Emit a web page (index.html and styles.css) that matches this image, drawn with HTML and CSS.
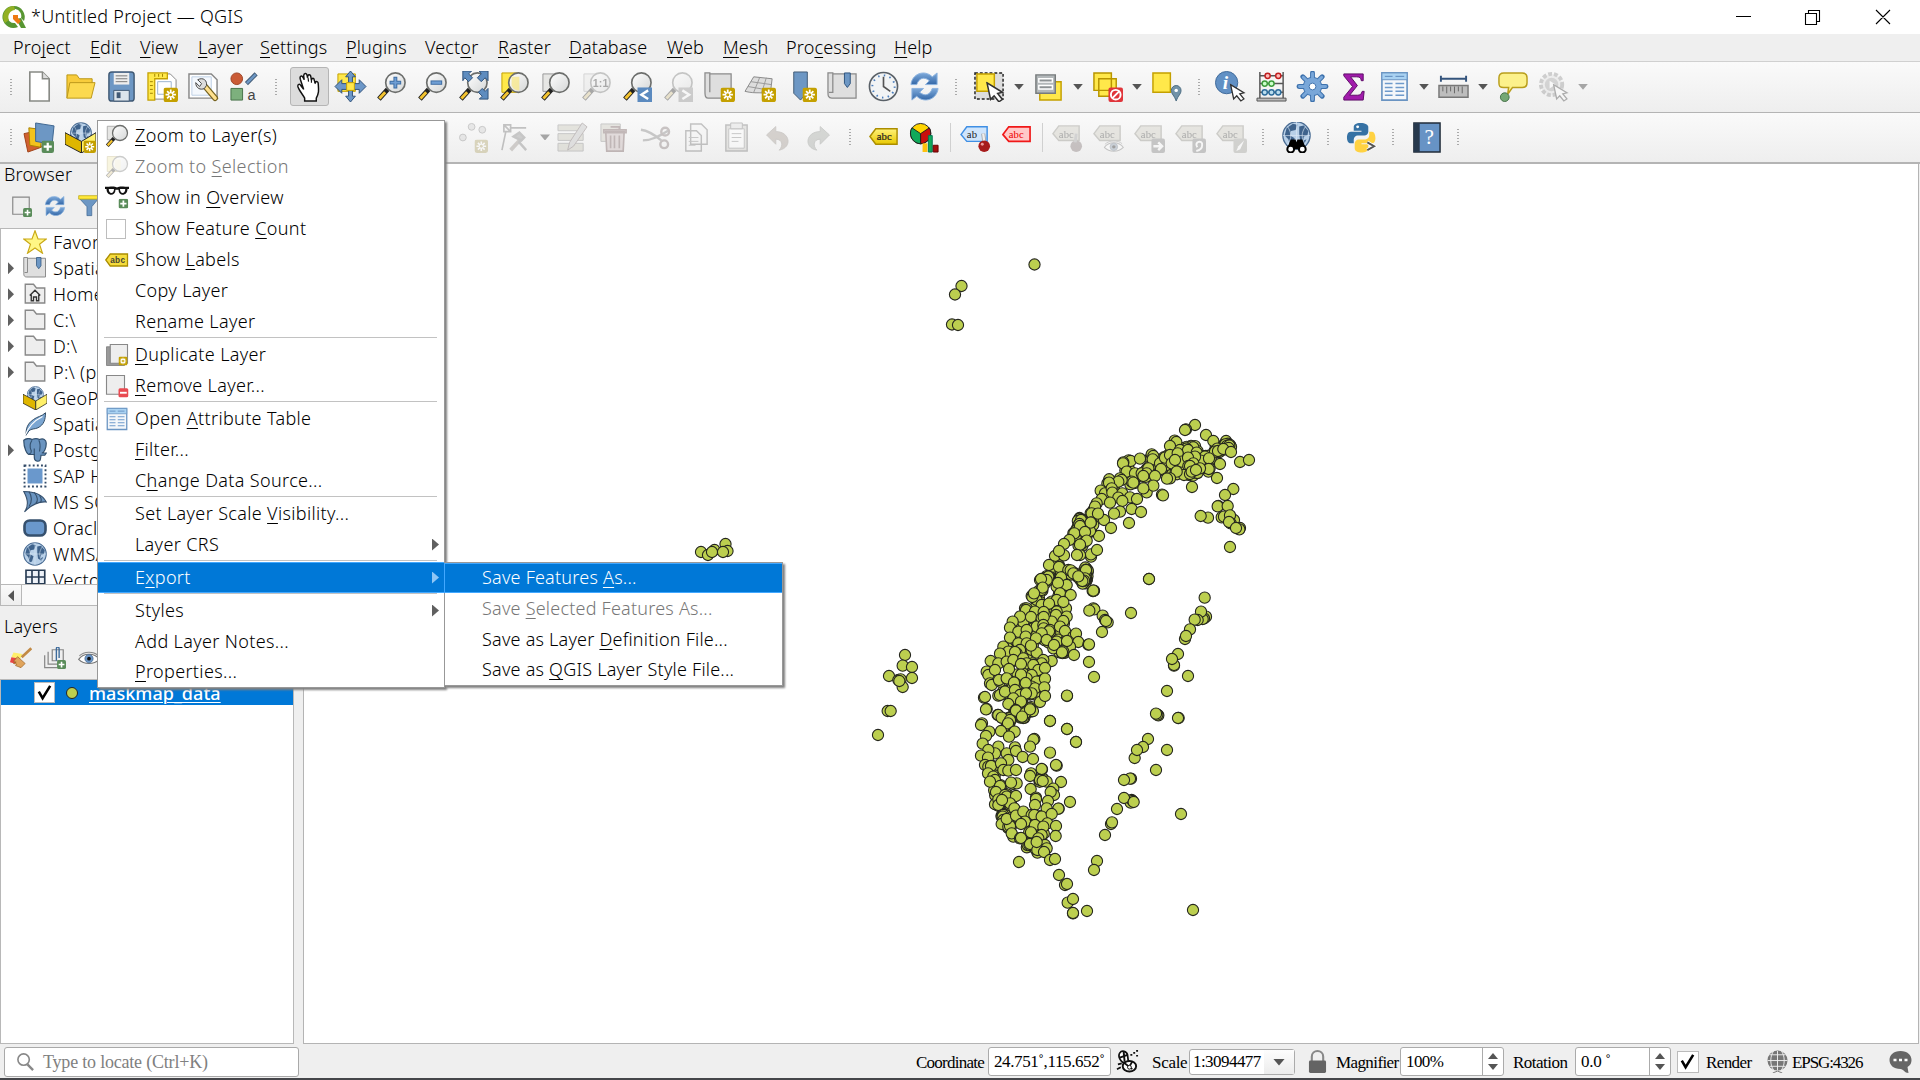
FILE: index.html
```html
<!DOCTYPE html>
<html lang="en">
<head>
<meta charset="utf-8">
<title>*Untitled Project — QGIS</title>
<link rel="stylesheet" href="styles.css">
</head>
<body>
<svg class="sprite" aria-hidden="true">
<defs>
<linearGradient id="blu" x2="0" y2="1"><stop offset="0" stop-color="#7da9da"/><stop offset="1" stop-color="#3468a8"/></linearGradient>
<linearGradient id="lens" x2="1" y2="1"><stop offset="0" stop-color="#fff"/><stop offset="1" stop-color="#d4d6d6"/></linearGradient>
<linearGradient id="tag" x2="0" y2="1"><stop offset="0" stop-color="#fff27a"/><stop offset="1" stop-color="#e8c800"/></linearGradient>
</defs>
<symbol id="logo" viewBox="0 0 24 24"><path d="M12 1a11 11 0 1 0 4 21l-3-4a7 7 0 1 1 6-5l3 3A11 11 0 0 0 12 1z" fill="#589632"/><path d="M12 1a11 11 0 0 0-9 17l4-3A7 7 0 0 1 13 5z" fill="#93b023"/><path d="M14 14l5-1 5 10h-5z" fill="#589632"/><path d="M11 10l5 0 0 3 3 3-3 3-5-5z" fill="#ee7913"/></symbol>
<symbol id="star" viewBox="0 0 14 14"><rect width="14" height="14" rx="2.5" fill="#c4a000"/><path d="M7 2v10M2 7h10M3.5 3.5l7 7M10.500 3.500l-7 7" stroke="#fff" stroke-width="1.700"/><circle cx="7" cy="7" r="1.500" fill="#c4a000"/></symbol>
<symbol id="plus" viewBox="0 0 14 14"><rect width="14" height="14" rx="2.500" fill="#5a8c5a"/><path d="M7 2.500v9M2.500 7h9" stroke="#fff" stroke-width="2.500"/></symbol>
<symbol id="mag" viewBox="0 0 32 32"><path d="M3 29l9-10" stroke="#222" stroke-width="5"/><path d="M3.500 28.500l6-6.500" stroke="#f4c430" stroke-width="3"/><path d="M12 19l3-3" stroke="#222" stroke-width="2"/><circle cx="20" cy="12" r="10" fill="url(#lens)" stroke="#6c6e6c" stroke-width="1.700"/></symbol>
<symbol id="cursor" viewBox="0 0 16 18"><path d="M1 1l3 14 3-3 4 5 3-2-4-5 4-1z" fill="#fff" stroke="#333" stroke-width="1.300"/></symbol>
<symbol id="new" viewBox="0 0 32 32"><path d="M6 1h13l7 7v23H6z" fill="#fff" stroke="#888a85" stroke-width="1.700"/><path d="M19 1v7h7" fill="#ddd" stroke="#888a85" stroke-width="1.500"/></symbol>
<symbol id="open" viewBox="0 0 32 32"><path d="M2 28V4h10l3 4h13v5" fill="#f8cc3c" stroke="#b99512"/><path d="M2 28l3-16h26l-4 16z" fill="#fcd94f" stroke="#bc981b"/></symbol>
<symbol id="save" viewBox="0 0 32 32"><rect x="3" y="1" width="26" height="30" rx="3" fill="#6d97c4" stroke="#415a75" stroke-width="1.500"/><path d="M8 2h16v12H8z" fill="#eee"/><path d="M10 5h12M10 8h12M10 11h12" stroke="#777"/><path d="M8 20h16v11H8z" fill="#dce4eb" stroke="#415a75"/><path d="M11 22h4v6h-4z" fill="#415a75"/></symbol>
<symbol id="layout" viewBox="0 0 32 32"><path d="M4 3h20l6 6v20H4z" fill="#fff" stroke="#888"/><path d="M1 2h20v6H8v22H1z" fill="#ffe84a" stroke="#c4a000" stroke-width="1.300"/><path d="M8 3v3M12 3v3M16 3v3M3 11h3M3 15h3M3 19h3M3 23h3" stroke="#a08200"/><path d="M11 11h14v13H11z" fill="none" stroke="#9bb4d0"/><use href="#star" x="17" y="17" width="15" height="15"/></symbol>
<symbol id="manager" viewBox="0 0 32 32"><path d="M1 3h23l6 6v19H1z" fill="#fff" stroke="#888" stroke-width="1.500"/><path d="M4 6h20v19H4z" fill="#f4f8fd" stroke="#bed0e5"/><path d="M17 15l11 13" stroke="#75621f" stroke-width="6" stroke-linecap="round"/><path d="M17 15l11 13" stroke="#ffe08d" stroke-width="3.500" stroke-linecap="round"/><path d="M10 9l4 4-2 3-4-4c0 6 5 8 9 6l2-3c1-5-3-9-9-6z" fill="#ddd" stroke="#444"/></symbol>
<symbol id="style" viewBox="0 0 32 32"><circle cx="8" cy="8" r="6" fill="#ca5b36" stroke="#9d4123"/><path d="M18 13L28 3" stroke="#415a75" stroke-width="4.500"/><path d="M18.500 12.500l9-9" stroke="#6d97c4" stroke-width="2.500"/><path d="M2 18h12v12H2z" fill="#7db07d" stroke="#47734a"/><text x="19" y="30" font-family="Liberation Sans" font-size="15" fill="#444">a</text></symbol>
<symbol id="hand" viewBox="0 0 32 32"><path d="M11 31v-3C9 24 5 20 4 16c-.5-2.500 2-3 3-1l3 4L6.500 8.500c-1-3.500 2-4.500 3-1.500l1 2-.5-4c0-3 3-3.500 3.500-.5l.5 2.500c0-4 3-4 3.500-.5l.5 3c.5-3 3-2.500 3 .5l1 2c1-2 3-1 3 1 .5 7 1 9-2 15v3z" fill="#fff" stroke="#111" stroke-width="1.500"/><path d="M14.500 7l.5 4M18 9v3M21.500 11v2" stroke="#111" stroke-width="1.200" fill="none"/></symbol>
<symbol id="panto" viewBox="0 0 32 32"><path d="M3 3h18v18H3z" fill="#ffe84a" stroke="#c4a000"/><path d="M16 0l5 6h-3v7h7v-4l7 7-7 7v-4h-7v7h3l-5 6-5-6h3v-7H7v4l-7-7 7-7v4h7V6h-3z" fill="#6c97c8" stroke="#2f527a"/><path d="M12 12h8v8h-8z" fill="#ffe84a" stroke="#c4a000"/></symbol>
<symbol id="zin" viewBox="0 0 32 32"><use href="#mag"/><path d="M20 6v12M14 12h12" stroke="#3d6ca2" stroke-width="4"/><path d="M20 7v10M15 12h10" stroke="#6f9ed4" stroke-width="2"/></symbol>
<symbol id="zout" viewBox="0 0 32 32"><use href="#mag"/><path d="M14 12h12" stroke="#3d6ca2" stroke-width="4.500"/><path d="M15 12h10" stroke="#6f9ed4" stroke-width="2.500"/></symbol>
<symbol id="zfull" viewBox="0 0 32 32"><use href="#mag"/><path d="M5 0h9l-3 3 4 4-4 4-4-4-2 3zM22 0h9v10l-3-3-4 4-4-4 4-4zM31 29h-9l3-3-4-4 4-4 3 3 3-3z" fill="#5e8cbf" stroke="#2f527a"/></symbol>
<symbol id="zsel" viewBox="0 0 32 32"><path d="M3 2h18v20H3z" fill="#ffe84a" stroke="#c4a000"/><use href="#mag"/><path d="M13 6h8v14a8 8 0 0 1-8-5z" fill="#f7e98c" opacity=".8"/></symbol>
<symbol id="zlay" viewBox="0 0 32 32"><path d="M3 3h18v18H3z" fill="#e6e6e4" stroke="#999"/><use href="#mag"/></symbol>
<symbol id="znat" viewBox="0 0 32 32"><use href="#zlay"/><text x="12" y="16" font-family="Liberation Sans" font-weight="bold" font-size="11" fill="#222">1:1</text></symbol>
<symbol id="zlast" viewBox="0 0 32 32"><use href="#mag"/><path d="M16 17h15v15H16z" fill="#5b8abf"/><path d="M27 20l-7 4.500 7 4.500" fill="none" stroke="#fff" stroke-width="2.500"/></symbol>
<symbol id="znext" viewBox="0 0 32 32"><use href="#mag"/><path d="M16 17h15v15H16z" fill="#888"/><path d="M20 20l7 4.500-7 4.500" fill="none" stroke="#fff" stroke-width="2.500"/></symbol>
<symbol id="mapv" viewBox="0 0 32 32"><path d="M6 3h22v25H4c-3 0-3-4-3-6V2h5v20" fill="#dedede" stroke="#8a8a8a" stroke-width="1.300"/><use href="#star" x="17" y="17" width="15" height="15"/></symbol>
<symbol id="map3" viewBox="0 0 32 32"><path d="M9 6l19 2-2 16c-8-3-14 0-26-3z" fill="#ddd" stroke="#888"/><path d="M6 11l21 3M3 16l23 4M15 7L9 22M22 7l-5 16" stroke="#999" fill="none"/><use href="#star" x="17" y="17" width="15" height="15"/></symbol>
<symbol id="bmk" viewBox="0 0 32 32"><path d="M8 1h14v21l-7 8-7-7z" fill="#6d97c4" stroke="#415a75"/><use href="#star" x="17" y="17" width="15" height="15"/></symbol>
<symbol id="bmks" viewBox="0 0 32 32"><path d="M6 3h24v25H5c-4 0-4-3-4-6V2h5v20H2" fill="#dfdfdf" stroke="#8a8a8a" stroke-width="1.300"/><path d="M18 2h6v11l-3 4-3-4z" fill="#6d97c4" stroke="#2e547e"/></symbol>
<symbol id="clock" viewBox="0 0 32 32"><circle cx="16" cy="16" r="14.500" fill="#f2f4f5" stroke="#596067" stroke-width="1.700"/><circle cx="16" cy="16" r="11.500" fill="none" stroke="#4b7ebd" stroke-width="2" stroke-dasharray="1.500 4.520"/><path d="M16 6v10l7 5" fill="none" stroke="#555" stroke-width="1.700"/></symbol>
<symbol id="refresh" viewBox="0 0 32 32"><path d="M2 14C3 3 16-2 24 6l5-4v12H17l4-4c-6-5-11-2-13 4z" fill="url(#blu)" stroke="#8bb3df"/><path d="M30 18C29 29 16 34 8 26l-5 4V18h12l-4 4c6 5 11 2 13-4z" fill="url(#blu)" stroke="#8bb3df"/></symbol>
<symbol id="select" viewBox="0 0 32 32"><path d="M1 2h29v27H1z" fill="#ddd" stroke="#222" stroke-width="1.500" stroke-dasharray="3 2"/><path d="M3 3h18v18H3z" fill="#ffe84a" stroke="#c4a000" stroke-width="1.500"/><use href="#cursor" x="12" y="11" width="20" height="22"/></symbol>
<symbol id="form" viewBox="0 0 32 32"><path d="M7 11h22v19H7z" fill="#ffe84a" stroke="#c4a000" stroke-width="1.500"/><path d="M3 4h20v19H3z" fill="#b3b8ba" stroke="#777b7c" stroke-width="1.500"/><path d="M6 8h14v3.500H6zM6 15h14v3.500H6z" fill="#8d9294" stroke="#fff" stroke-width="1.500"/></symbol>
<symbol id="desel" viewBox="0 0 32 32"><path d="M2 2h18v18H2zM7 8h18v18H7z" fill="#ffe84a" stroke="#b79400" stroke-width="1.500"/><rect x="17" y="17" width="15" height="15" rx="2" fill="#e0353b"/><circle cx="24.500" cy="24.500" r="5" fill="none" stroke="#fff" stroke-width="2"/><path d="M21 28l7-7" stroke="#fff" stroke-width="2"/></symbol>
<symbol id="selloc" viewBox="0 0 32 32"><path d="M2 2h18v20H2z" fill="#ffe84a" stroke="#c4a000" stroke-width="1.500"/><path d="M26 31c-2-6-5-7-5-11a5 5 0 0 1 10 0c0 4-3 5-5 11z" fill="#7192a8" stroke="#4b6b80"/><circle cx="26" cy="20" r="1.800" fill="#fff"/></symbol>
<symbol id="info" viewBox="0 0 32 32"><circle cx="12" cy="12" r="11.500" fill="#6190c4" stroke="#3f6999"/><text x="8" y="19" font-family="Liberation Serif" font-style="italic" font-weight="bold" font-size="20" fill="#fff">i</text><use href="#cursor" x="15" y="13" width="17" height="19"/></symbol>
<symbol id="abacus" viewBox="0 0 32 32"><path d="M4 1v28M28 1v28M4 5h24M4 13h24M4 22h24" stroke="#555" stroke-width="1.500"/><path d="M1 28h30v3H1z" fill="#bbb" stroke="#555"/><g stroke-width="1.500"><g fill="#fbb" stroke="#c02020"><circle cx="12" cy="5" r="2.700"/><circle cx="23" cy="5" r="2.700"/></g><g fill="#cfc" stroke="#3c9b3c"><circle cx="9" cy="13" r="2.700"/><circle cx="16" cy="13" r="2.700"/></g><g fill="#bde" stroke="#2d6c9b"><circle cx="9" cy="22" r="2.700"/><circle cx="16" cy="22" r="2.700"/><circle cx="23" cy="22" r="2.700"/></g></g></symbol>
<symbol id="gear" viewBox="0 0 32 32"><path d="M16 2v28M2 16h28M6 6l20 20M26 6L6 26" stroke="#3e72ad" stroke-width="5" stroke-linecap="round"/><circle cx="16" cy="16" r="9.500" fill="#79a7d9" stroke="#3e72ad"/><path d="M16 2.500v27M2.500 16h27M6.500 6.500l19 19M25.500 6.500l-19 19" stroke="#79a7d9" stroke-width="3" stroke-linecap="round"/><circle cx="16" cy="16" r="3.500" fill="#fff" stroke="#3e72ad"/></symbol>
<symbol id="sigma" viewBox="0 0 32 32"><path d="M6 3h20v7h-2c0-3-2-4-5-4h-6l7 9-8 10h8c3 0 4-1 5-4h2l-1 9H6v-3l9-11-9-11z" fill="#a11bab" stroke="#5c0a66"/></symbol>
<symbol id="table" viewBox="0 0 32 32"><path d="M3 2h26v28H3z" fill="#f4f7fa" stroke="#6a94c2" stroke-width="1.700"/><path d="M3 2h26v7H3z" fill="#a9d2f2" stroke="#6a94c2"/><path d="M6 5.500h8M17 5.500h9" stroke="#5a86b8"/><path d="M6 13h8M17 13h9M6 17h8M17 17h9M6 21h8M17 21h9M6 25h8M17 25h9" stroke="#6e9acb" stroke-width="1.600"/></symbol>
<symbol id="ruler" viewBox="0 0 32 32"><path d="M3 8h26M3 5v6M29 5v6" stroke="#34547c" stroke-width="2"/><path d="M1 15h30v12H1z" fill="#bdbdbd" stroke="#777" stroke-width="1.500"/><path d="M5 16v5M9 16v7M13 16v5M17 16v7M21 16v5M25 16v7" stroke="#666"/></symbol>
<symbol id="tip" viewBox="0 0 32 32"><path d="M7 2h19c3 0 5 2 5 5v5c0 4-2 5-5 5H16l-5 7 1-7H7c-4 0-5-1-5-5V7c0-3 2-5 5-5z" fill="#fcf18b" stroke="#b99e1c" stroke-width="1.500"/><circle cx="8" cy="27" r="4.500" fill="#75a875" stroke="#47734a"/></symbol>
<symbol id="action" viewBox="0 0 32 32"><circle cx="14" cy="14" r="11" fill="#ddd" stroke="#888" stroke-width="4" stroke-dasharray="4 2"/><circle cx="14" cy="14" r="7" fill="#999"/><path d="M12 10l6 4-6 4z" fill="#fff"/><use href="#cursor" x="15" y="13" width="17" height="19"/></symbol>
<symbol id="source" viewBox="0 0 32 32"><path d="M0 12l14-3 4 17-14 5z" fill="#d0602f" stroke="#9f4119"/><path d="M5 6l15 2-3 18-11-2z" fill="#f3c31d" stroke="#a88100"/><path d="M12 1l19 3-2 19-17-3z" fill="#6d97c4" stroke="#3d6591"/><use href="#plus" x="18" y="19" width="13" height="13"/></symbol>
<symbol id="globe" viewBox="0 0 32 32"><circle cx="16" cy="16" r="15" fill="#b8d0e8" stroke="#4a6c93" stroke-width="1.500"/><path d="M5 8l7-5 5 1-2 6-5 1-1 5 5 3-2 7-3 1-2-7-4-4zM19 6l5-1 5 6-1 5-4 1-1 7-3-2-1-8zM23 22l4-2-3 6z" fill="#3f638c"/><path d="M16 1v30M1 16h30M6 6c5 7 5 13 0 20M26 6c-5 7-5 13 0 20" fill="none" stroke="#dce9f5" stroke-width=".7"/></symbol>
<symbol id="gpkg" viewBox="0 0 32 32"><use href="#globe" x="5" y="0" width="23" height="23"/><path d="M0 11l17 9v12L0 23z" fill="#dfb600" stroke="#222"/><path d="M17 20l15-9v12l-15 9z" fill="#fff06a" stroke="#222"/></symbol>
<symbol id="gpkgnew" viewBox="0 0 32 32"><use href="#gpkg"/><use href="#star" x="19" y="19" width="13" height="13"/></symbol>
<symbol id="addpt" viewBox="0 0 32 32"><circle cx="13" cy="5" r="3.500" fill="#ccc" stroke="#777"/><circle cx="24" cy="8" r="3.500" fill="#ccc" stroke="#777"/><circle cx="4" cy="16" r="3.500" fill="#ccc" stroke="#777"/><use href="#star" x="16" y="18" width="14" height="14"/></symbol>
<symbol id="vertex" viewBox="0 0 32 32"><path d="M4 3h7v7H4zM10 6h17M6 10L2 29M4 3l7 7" fill="none" stroke="#666" stroke-width="1.700"/><path d="M11 29l12-13" stroke="#987" stroke-width="4"/><path d="M14 15l6-4 5 5-3 3zM19 20l8 9" fill="#888" stroke="#777" stroke-width="2.500"/></symbol>
<symbol id="edits" viewBox="0 0 32 32"><path d="M1 3h26v6H1zM1 12h26v7H1zM1 22h26v8H1z" fill="#c7c39c" stroke="#777"/><path d="M11 29l2-8L26 1l5 4-14 20z" fill="#bbb" stroke="#755"/></symbol>
<symbol id="trash" viewBox="0 0 32 32"><path d="M3 2h20v18H3z" fill="#ccc6a5" stroke="#777"/><path d="M8 10h19l-1 20H9zM6 8h23v3H6zM13 5h9v3M13 14v13M17 14v13M22 14v13" fill="#d6a8a8" stroke="#844" stroke-width="1.700"/></symbol>
<symbol id="cut" viewBox="0 0 32 32"><path d="M2 8c8 1 15 6 21 11M4 19c9 0 16-4 26-10" stroke="#777" stroke-width="2.500" fill="none"/><circle cx="27" cy="10" r="4" fill="none" stroke="#866" stroke-width="2.500"/><circle cx="26" cy="23" r="4" fill="none" stroke="#866" stroke-width="2.500"/></symbol>
<symbol id="copy" viewBox="0 0 32 32"><path d="M11 2h11l6 6v15H11zM6 9h11l5 5v16H6z" fill="#f4f4f4" stroke="#666" stroke-width="1.500"/><path d="M9 16h10M9 20h10M9 24h7" stroke="#777"/></symbol>
<symbol id="paste" viewBox="0 0 32 32"><path d="M5 3h22v27H5z" fill="#c9c7bb" stroke="#666" stroke-width="1.500"/><path d="M8 7h16v20H8z" fill="#fff" stroke="#777"/><path d="M10 1h12v6H10z" fill="#ddd" stroke="#666"/><path d="M11 12h10M11 16h10M11 20h7" stroke="#777"/></symbol>
<symbol id="undo" viewBox="0 0 32 32"><path d="M3 13L14 3v6c17 0 20 19 4 22 5-5 4-13-4-13v6z" fill="#a98f78" stroke="#8a796a"/></symbol>
<symbol id="redo" viewBox="0 0 32 32"><path d="M29 13L18 3v6C1 9-2 28 14 31c-5-5-4-13 4-13v6z" fill="#98a292" stroke="#777f72"/></symbol>
<symbol id="label" viewBox="0 0 32 32"><path d="M2 15l6-8h22v16H8z" fill="url(#tag)" stroke="#ab8d00" stroke-width="1.500"/><text x="9" y="19" font-family="Liberation Serif" font-size="11" fill="#222" stroke="#222" stroke-width=".2">abc</text></symbol>
<symbol id="tagsmall" viewBox="0 0 32 32"><path d="M1 16l6-8h23v16H7z" fill="#f5dc3c" stroke="#ab8d00" stroke-width="1.700"/><text x="7" y="20" font-family="Liberation Sans" font-weight="bold" font-size="11" fill="#443">abc</text></symbol>
<symbol id="diagram" viewBox="0 0 32 32"><circle cx="12" cy="12" r="10.500" fill="#ffd400" stroke="#222"/><path d="M12 12L3 6a11 11 0 0 0 9 16.500z" fill="#10a95a" stroke="#222"/><path d="M12 12l9-6a11 11 0 0 1-9 16.500z" fill="#c80d0d" stroke="#222"/><path d="M14 22h5v9h-5z" fill="#ffc20d"/><path d="M20 14h4v17h-4z" fill="#10a95a" stroke="#075"/><path d="M25 24h5v7h-5z" fill="#a30d0d" stroke="#600"/></symbol>
<symbol id="pin" viewBox="0 0 32 32"><path d="M1 13l6-8h21v15H7z" fill="#cfe5fc" stroke="#3f8fe4" stroke-width="1.500"/><text x="7" y="17" font-family="Liberation Serif" font-size="11" fill="#222">ab</text><path d="M24 12l1 9" stroke="#999" stroke-width="4"/><path d="M24 12l1 9" stroke="#eee" stroke-width="2.500"/><circle cx="25" cy="25" r="6" fill="#a61b1b"/><circle cx="23" cy="23" r="1.500" fill="#e99"/></symbol>
<symbol id="redtag" viewBox="0 0 32 32"><path d="M2 13l6-8h22v15H8z" fill="#ffc9c9" stroke="#f01818" stroke-width="1.700"/><text x="8" y="17" font-family="Liberation Serif" font-size="11" fill="#e00">abc</text></symbol>
<symbol id="graytag" viewBox="0 0 32 32"><path d="M1 12l6-8h21v15H7z" fill="#ccc8a8" stroke="#89866d" stroke-width="1.500"/><text x="7" y="16" font-family="Liberation Serif" font-size="11" fill="#222">abc</text></symbol>
<symbol id="eye" viewBox="0 0 32 20"><path d="M1 12C8 2 24 2 31 12 23 20 9 20 1 12z" fill="#fff" stroke="#777" stroke-width="1.700"/><path d="M2 7C9 0 22 0 29 6" fill="none" stroke="#888" stroke-width="1.500"/><circle cx="16" cy="11" r="6" fill="#6c97c8" stroke="#42638a"/><circle cx="16" cy="11" r="2.700" fill="#111"/></symbol>
<symbol id="gt1" viewBox="0 0 32 32"><use href="#graytag"/><circle cx="25" cy="25" r="6" fill="#866"/><path d="M25 12l-1 9" stroke="#999" stroke-width="3"/></symbol>
<symbol id="gt2" viewBox="0 0 32 32"><use href="#graytag"/><use href="#eye" x="11" y="18" width="21" height="14"/></symbol>
<symbol id="gt3" viewBox="0 0 32 32"><use href="#graytag"/><rect x="18" y="17" width="14" height="15" rx="2" fill="#777"/><path d="M20 25h8M25 21l4 4-4 4" fill="none" stroke="#fff" stroke-width="2.500"/></symbol>
<symbol id="gt4" viewBox="0 0 32 32"><use href="#graytag"/><rect x="18" y="17" width="14" height="15" rx="2" fill="#777"/><path d="M23 26c-4-6 6-8 5-2 0 3-2 5-6 6" fill="none" stroke="#fff" stroke-width="2"/></symbol>
<symbol id="gt5" viewBox="0 0 32 32"><use href="#graytag"/><rect x="18" y="17" width="14" height="15" rx="2" fill="#998"/><path d="M21 30l2-5 6-6-4 9z" fill="#fff"/></symbol>
<symbol id="metasearch" viewBox="0 0 32 32"><use href="#globe" x="1" y="-1" width="30" height="30"/><path d="M6 28l4-10h5l1 3 1-3h5l4 10z" fill="#000"/><circle cx="10" cy="28" r="3.500" fill="#fff" stroke="#000" stroke-width="2"/><circle cx="22" cy="28" r="3.500" fill="#fff" stroke="#000" stroke-width="2"/></symbol>
<symbol id="python" viewBox="0 0 32 32"><path d="M15 1c-5 0-7 2-7 4v4h8v1H5c-3 0-4 3-4 6s1 6 4 6h3v-4c0-2 2-4 4-4h7c2 0 4-2 4-4V5c0-2-3-4-8-4z" fill="#3672a4"/><circle cx="12" cy="5" r="1.500" fill="#fff"/><path d="M24 10v4c0 2-2 4-4 4h-7c-2 0-4 2-4 4v5c0 6 14 6 14 0v-4h-7v-1h11c5 0 4-12 0-12z" fill="#ffd242"/><path d="M22 21l7 4-7 4" fill="none" stroke="#fff" stroke-width="3.500"/><path d="M22 21l7 4-7 4" fill="none" stroke="#555" stroke-width="2"/></symbol>
<symbol id="help" viewBox="0 0 32 32"><path d="M3 1h27v30H3z" fill="#6793c5" stroke="#222d3a" stroke-width="1.500"/><path d="M3 1h6v30H3z" fill="#27394d"/><text x="14" y="23" font-family="Liberation Serif" font-size="22" fill="#fff">?</text></symbol>
<symbol id="addsel" viewBox="0 0 32 32"><path d="M4 3h24v25H4z" fill="#eee" stroke="#888" stroke-width="1.700"/><use href="#plus" x="19" y="19" width="13" height="13"/></symbol>
<symbol id="funnel" viewBox="0 0 32 32"><path d="M2 5h28l-10 12v13h-7V17z" fill="#6d97c4" stroke="#3f6690"/><path d="M1 1h30v5H1z" fill="#ffe93b" stroke="#b8a000"/></symbol>
<symbol id="fav" viewBox="0 0 32 32"><path d="M16 1l4 11h11l-9 7 4 12-10-7-10 7 4-12-9-7h11z" fill="#fff685" stroke="#c9a815" stroke-width="1.500"/></symbol>
<symbol id="folder" viewBox="0 0 32 32"><path d="M3 3h11l4 5h11v20H3z" fill="#eee" stroke="#888" stroke-width="1.800"/></symbol>
<symbol id="home" viewBox="0 0 32 32"><use href="#folder"/><path d="M9 18l7-7 7 7M11 17v8h3v-5h4v5h3v-8" fill="none" stroke="#333" stroke-width="1.800"/></symbol>
<symbol id="feather" viewBox="0 0 32 32"><path d="M4 31c0-8 1-15 10-21 5-4 11-4 16-9 0 9-2 16-10 20-4 2-9 1-12 4z" fill="#7ba6d2" stroke="#2f4962" stroke-width="1.300"/><path d="M3 31C7 20 14 12 26 6" fill="none" stroke="#fff" stroke-width="1.500"/></symbol>
<symbol id="pg" viewBox="0 0 32 32"><path d="M1 3c5-4 9-2 11-1 5-2 8-1 10 0 5-2 9 0 9 5 0 7-3 13-6 13l6 0-2 3h-5c-1 8-1 8-5 8-4-1-4-3-4-9h-6C5 22 1 13 1 3z" fill="#6a94c0" stroke="#33516f" stroke-width="1.600"/><path d="M12 3c-4 6-3 10-1 14 0 4-1 4-3 4M21 3c3 5 2 9 1 15M15 14v9" fill="none" stroke="#33516f" stroke-width="1.500"/></symbol>
<symbol id="hana" viewBox="0 0 32 32"><path d="M6 6h20v20H6z" fill="#6a98cc"/><path d="M2 2h28v28H2z" fill="none" stroke="#334b68" stroke-width="2.500" stroke-dasharray="2.500 3"/></symbol>
<symbol id="mssql" viewBox="0 0 32 32"><path d="M1 2c12 0 24 2 30 14-10-1-20 4-29 13 7-9 4-18-1-27z" fill="#6a94c0" stroke="#36506d" stroke-width="1.500"/><path d="M8 2c5 8 4 14 0 20M15 3c5 7 5 12 2 15M22 7c3 5 3 8 1 10" fill="none" stroke="#36506d" stroke-width="1.500"/></symbol>
<symbol id="oracle" viewBox="0 0 32 32"><rect x="2" y="6" width="28" height="20" rx="7" fill="#6a98cc" stroke="#35506e" stroke-width="3.500"/></symbol>
<symbol id="vtile" viewBox="0 0 32 32"><path d="M4 3h25v27H4zM12 3v27M21 3v27M4 12h25M4 21h25" fill="#eef2f8" stroke="#273b53" stroke-width="2.200"/></symbol>
<symbol id="brush" viewBox="0 0 32 32"><path d="M5 8l13 2-3 7-13-2z" fill="#fff06b"/><path d="M2 15l13 2-4 8-11-3z" fill="#e84545"/><path d="M17 15L31 2" stroke="#c28a45" stroke-width="4"/><path d="M11 14l11 10-6 6-8-3 2-2-5-1 4-2-4-1z" fill="#e0a45c" stroke="#9c6325"/></symbol>
<symbol id="group" viewBox="0 0 32 32"><path d="M1 12v18h18M6 7v18h16M12 4h16v16H12z" fill="none" stroke="#888" stroke-width="1.800"/><path d="M18 20V3c0-4 4-4 4 0v13" fill="none" stroke="#3c6a9b" stroke-width="2"/><use href="#plus" x="19" y="19" width="13" height="13"/></symbol>
<symbol id="glasses" viewBox="0 0 32 32"><path d="M0 1h5c4 0 7-1 11 1 4-2 7-1 11-1h5v3h-2c0 10-12 10-12 1h-4C14 14 2 14 2 4H0z" fill="#111"/><path d="M5 4h7c0 7-7 7-7 0zM20 4h7c0 7-7 7-7 0z" fill="#fff"/><use href="#plus" x="18" y="17" width="13" height="13"/></symbol>
<symbol id="dup" viewBox="0 0 32 32"><path d="M2 5h24v25H2z" fill="#999" stroke="#777"/><path d="M7 2h23v25H7z" fill="#eee" stroke="#888" stroke-width="1.500"/><use href="#star" x="18" y="18" width="12" height="12"/></symbol>
<symbol id="remove" viewBox="0 0 32 32"><path d="M2 2h24v25H2z" fill="#eee" stroke="#888" stroke-width="1.500"/><rect x="18" y="19" width="13" height="12" rx="2" fill="#e94b52"/><path d="M20 25h9" stroke="#fff" stroke-width="2.500"/></symbol>
<symbol id="search" viewBox="0 0 20 20"><circle cx="8" cy="8" r="6" fill="none" stroke="#888" stroke-width="1.700"/><path d="M12 13l6 6" stroke="#888" stroke-width="2.500"/></symbol>
<symbol id="mouse" viewBox="0 0 24 24"><path d="M4 3C6 0 11 1 12 5l1 8H7C4 10 2 6 4 3z" fill="#fff" stroke="#111" stroke-width="1.800"/><path d="M8 2l1 10M4 8l8-3" stroke="#111" stroke-width="2"/><ellipse cx="14" cy="17" rx="7" ry="5.500" fill="#fff" stroke="#111" stroke-width="2"/><path d="M8 13l9 7M17 12l-4 7M1 20l4-2M2 15l4-1M15 5h2m1-2h2m1-2h2m-2 5h2" stroke="#111" stroke-width="1.800"/><circle cx="14" cy="18" r="2" fill="#fff" stroke="#111"/></symbol>
<symbol id="lock" viewBox="0 0 20 24"><path d="M4 12V7c0-8 12-8 12 0v5" fill="none" stroke="#888" stroke-width="2.200"/><rect x="1" y="11" width="18" height="13" rx="1.500" fill="#646464"/></symbol>
<symbol id="wire" viewBox="0 0 24 24"><circle cx="12" cy="11" r="10.500" fill="#777"/><path d="M1.500 11h21M12 1v22M4 5h16M4 17h16M8 1c-4 5-4 15 0 20M16 1c4 5 4 15 0 20" fill="none" stroke="#eee"/><path d="M7 24l5-2 5 2" stroke="#777" fill="none"/></symbol>
<symbol id="bubble" viewBox="0 0 24 24"><path d="M12 1C5 1 1 5 1 10s4 9 11 9c3 0 4 4 8 4l-1-6c3-2 4-4 4-7 0-5-4-9-11-9z" fill="#666"/><path d="M5 10h3m2.500 0h3m2.500 0h3" stroke="#fff" stroke-width="2.500"/></symbol>
<symbol id="check" viewBox="0 0 20 20"><path d="M4 9l4 7L16 3" fill="none" stroke="#000" stroke-width="2.700"/></symbol>
</svg>

<div class="window">
  <header class="titlebar">
    <svg class="logo"><use href="#logo"/></svg><span class="title">*Untitled Project — QGIS</span>
    <svg class="winbtns" viewBox="0 0 180 34"><path d="M17 16.500h15M86.500 13.500h11v11h-11zM89.500 13.500v-3h11v11h-3M157 10l14 14M171 10l-14 14" fill="none" stroke="#000" stroke-width="1.100"/></svg>
  </header>
  <nav class="menubar"><span>Pro<u>j</u>ect</span><span><u>E</u>dit</span><span><u>V</u>iew</span><span><u>L</u>ayer</span><span><u>S</u>ettings</span><span><u>P</u>lugins</span><span>Vect<u>o</u>r</span><span><u>R</u>aster</span><span><u>D</u>atabase</span><span><u>W</u>eb</span><span><u>M</u>esh</span><span>Pro<u>c</u>essing</span><span><u>H</u>elp</span></nav>

  <div class="toolbar">
    <i class="grip first"></i>
    <svg><use href="#new"/></svg><svg><use href="#open"/></svg><svg><use href="#save"/></svg><svg><use href="#layout"/></svg><svg><use href="#manager"/></svg><svg><use href="#style"/></svg>
    <i class="grip g24"></i>
    <svg class="active"><use href="#hand"/></svg><svg><use href="#panto"/></svg><svg><use href="#zin"/></svg><svg><use href="#zout"/></svg><svg><use href="#zfull"/></svg><svg><use href="#zsel"/></svg><svg><use href="#zlay"/></svg><svg class="off"><use href="#znat"/></svg><svg><use href="#zlast"/></svg><svg class="off"><use href="#znext"/></svg><svg><use href="#mapv"/></svg><svg><use href="#map3"/></svg><svg><use href="#bmk"/></svg><svg><use href="#bmks"/></svg><svg><use href="#clock"/></svg><svg><use href="#refresh"/></svg>
    <i class="grip g24"></i>
    <svg><use href="#select"/></svg><b class="drop"></b><svg><use href="#form"/></svg><b class="drop"></b><svg><use href="#desel"/></svg><b class="drop"></b><svg><use href="#selloc"/></svg>
    <i class="grip g22"></i>
    <svg><use href="#info"/></svg><svg><use href="#abacus"/></svg><svg><use href="#gear"/></svg><svg><use href="#sigma"/></svg><svg><use href="#table"/></svg><b class="drop"></b><svg><use href="#ruler"/></svg><b class="drop"></b><svg><use href="#tip"/></svg><svg class="off"><use href="#action"/></svg><b class="drop off"></b>
  </div>
  <div class="toolbar">
    <i class="grip first"></i>
    <svg><use href="#source"/></svg><svg><use href="#gpkgnew"/></svg>
    <span class="hidden-tools"></span>
    <svg class="off"><use href="#addpt"/></svg><svg class="off"><use href="#vertex"/></svg><b class="drop off2"></b><svg class="off"><use href="#edits"/></svg><svg class="off"><use href="#trash"/></svg><svg class="off"><use href="#cut"/></svg><svg class="off"><use href="#copy"/></svg><svg class="off"><use href="#paste"/></svg><svg class="off undo"><use href="#undo"/></svg><svg class="off undo"><use href="#redo"/></svg>
    <i class="grip g24"></i>
    <svg><use href="#label"/></svg><svg><use href="#diagram"/></svg><i class="rule"></i><svg><use href="#pin"/></svg><svg><use href="#redtag"/></svg><i class="rule"></i>
    <svg class="off"><use href="#gt1"/></svg><svg class="off"><use href="#gt2"/></svg><svg class="off"><use href="#gt3"/></svg><svg class="off"><use href="#gt4"/></svg><svg class="off"><use href="#gt5"/></svg>
    <i class="grip g24"></i><svg><use href="#metasearch"/></svg><i class="grip g24"></i><svg><use href="#python"/></svg><i class="grip g24"></i><svg><use href="#help"/></svg><i class="grip g24"></i>
  </div>

  <main class="work">
    <aside class="side">
      <h2>Browser</h2>
      <div class="ptools"><svg><use href="#addsel"/></svg><svg><use href="#refresh"/></svg><svg><use href="#funnel"/></svg></div>
      <div class="tree">
        <div class="node leaf"><svg><use href="#fav"/></svg>Favorites</div>
        <div class="node"><svg><use href="#bmks"/></svg>Spatial Bookmarks</div>
        <div class="node"><svg><use href="#home"/></svg>Home</div>
        <div class="node"><svg><use href="#folder"/></svg>C:\</div>
        <div class="node"><svg><use href="#folder"/></svg>D:\</div>
        <div class="node"><svg><use href="#folder"/></svg>P:\ (p)</div>
        <div class="node leaf"><svg><use href="#gpkg"/></svg>GeoPackage</div>
        <div class="node leaf"><svg><use href="#feather"/></svg>SpatiaLite</div>
        <div class="node"><svg><use href="#pg"/></svg>PostgreSQL</div>
        <div class="node leaf"><svg><use href="#hana"/></svg>SAP HANA</div>
        <div class="node leaf"><svg><use href="#mssql"/></svg>MS SQL Server</div>
        <div class="node leaf"><svg><use href="#oracle"/></svg>Oracle</div>
        <div class="node leaf"><svg><use href="#globe"/></svg>WMS/WMTS</div>
        <div class="node leaf"><svg><use href="#vtile"/></svg>Vector Tiles</div>
      </div>
      <div class="hscroll"><i></i></div>
      <h2 class="lay">Layers</h2>
      <div class="ptools low"><svg><use href="#brush"/></svg><svg><use href="#group"/></svg><svg><use href="#eye"/></svg></div>
      <div class="layers"><div class="layer"><span class="box"><svg><use href="#check"/></svg></span><i class="dot"></i><span class="name">maskmap_data</span></div></div>
    </aside>
    <section class="map"><svg id="canvas" viewBox="304 164 1614 879"></svg></section>
  </main>

  <footer class="status">
    <div class="locate"><svg><use href="#search"/></svg><span>Type to locate (Ctrl+K)</span></div>
    <label class="s-coord">Coordinate</label><div class="field f-coord">24.751˚,115.652˚</div><svg class="i-mouse"><use href="#mouse"/></svg>
    <label class="s-scale">Scale</label><div class="field f-scale">1:3094477<i class="dd"></i></div><svg class="i-lock"><use href="#lock"/></svg>
    <label class="s-mag">Magnifier</label><div class="field f-mag">100%<i class="spin"></i></div>
    <label class="s-rot">Rotation</label><div class="field f-rot">0.0 ˚<i class="spin"></i></div>
    <span class="box s-box"><svg><use href="#check"/></svg></span><label class="s-ren">Render</label><svg class="i-wire"><use href="#wire"/></svg><label class="s-epsg">EPSG:4326</label><svg class="i-bub"><use href="#bubble"/></svg>
  </footer>
  <div class="edge"></div>
</div>

<div class="menu main-menu">
  <div class="item"><svg><use href="#zlay"/></svg><span><u>Z</u>oom to Layer(s)</span></div>
  <div class="item dis"><svg><use href="#zsel"/></svg><span>Zoom to <u>S</u>election</span></div>
  <div class="item"><svg><use href="#glasses"/></svg><span>Show in <u>O</u>verview</span></div>
  <div class="item"><i class="empty"></i><span>Show Feature <u>C</u>ount</span></div>
  <div class="item"><svg><use href="#tagsmall"/></svg><span>Show <u>L</u>abels</span></div>
  <div class="item"><span>Copy Layer</span></div>
  <div class="item"><span>Re<u>n</u>ame Layer</span></div>
  <hr>
  <div class="item"><svg><use href="#dup"/></svg><span><u>D</u>uplicate Layer</span></div>
  <div class="item"><svg><use href="#remove"/></svg><span><u>R</u>emove Layer...</span></div>
  <hr>
  <div class="item"><svg><use href="#table"/></svg><span>Open <u>A</u>ttribute Table</span></div>
  <div class="item"><span><u>F</u>ilter...</span></div>
  <div class="item"><span>C<u>h</u>ange Data Source...</span></div>
  <hr>
  <div class="item"><span>Set Layer Scale <u>V</u>isibility...</span></div>
  <div class="item sub"><span>Layer CRS</span></div>
  <hr>
  <div class="item sub on"><span>E<u>x</u>port</span></div>
  <hr>
  <div class="item sub"><span>Styles</span></div>
  <div class="item"><span>Add Layer Notes...</span></div>
  <div class="item"><span><u>P</u>roperties...</span></div>
</div>
<div class="menu sub-menu">
  <div class="item on"><span>Save Features <u>A</u>s...</span></div>
  <div class="item dis"><span>Save <u>S</u>elected Features As...</span></div>
  <div class="item"><span>Save as Layer <u>D</u>efinition File...</span></div>
  <div class="item"><span>Save as <u>Q</u>GIS Layer Style File...</span></div>
</div>
<script src="points.js"></script>
</body>
</html>
```
FILE: styles.css
```css
* { box-sizing: border-box; }
body { margin: 0; width: 1920px; height: 1080px; overflow: hidden; background: #efefef; color: #000; font: 350 18px/24px "Noto Sans", "Open Sans", sans-serif; letter-spacing: .15px; }
svg { display: block; flex: none; }
.sprite { position: absolute; width: 0; height: 0; }
.window { display: flex; flex-direction: column; width: 1920px; height: 1080px; }
u { text-decoration-thickness: 1px; text-underline-offset: 3px; text-decoration-skip-ink: none; }

.titlebar { display: flex; align-items: center; height: 34px; background: #fff; }
.logo { width: 24px; height: 24px; margin: 0 5px 0 2px; }
.title { flex: 1; white-space: nowrap; letter-spacing: .26px; padding-bottom: 2px; }
.winbtns { width: 180px; height: 34px; margin-right: 21px; }
.menubar { display: flex; align-items: center; height: 28px; padding: 0 0 1px 13px; border-bottom: 1px solid #d0d0d0; }
.menubar span { width: 77px; white-space: nowrap; }
.menubar span:nth-child(2) { width: 50px; }
.menubar span:nth-child(3) { width: 58px; }
.menubar span:nth-child(4) { width: 62px; }
.menubar span:nth-child(5) { width: 86px; }
.menubar span:nth-child(6) { width: 79px; }
.menubar span:nth-child(7) { width: 73px; }
.menubar span:nth-child(8) { width: 71px; }
.menubar span:nth-child(9) { width: 98px; }
.menubar span:nth-child(10) { width: 56px; }
.menubar span:nth-child(11) { width: 63px; }
.menubar span:nth-child(12) { width: 108px; }

.toolbar { display: flex; align-items: center; height: 51px; background: linear-gradient(#fafafa, #eeeeee); border-bottom: 1px solid #b4b4b4; }
.toolbar + .toolbar { height: 52px; border-bottom-width: 2px; }
.toolbar svg { width: 41px; height: 31px; }
.toolbar svg.off { opacity: .36; filter: grayscale(.6); }
.toolbar svg.undo { height: 27px; }
.toolbar svg.active { width: 39px; height: 39px; padding: 3px 0; margin: 0 1px; background: #dcdcdc; border: 1px solid #b5b5b5; border-radius: 3px; }
.grip { flex: none; height: 18px; background: radial-gradient(circle, #aaa .7px, transparent 1px) 0 0 / 4px 3px; width: 5px; }
.grip.first { margin: 0 5px 0 9px; }
.grip.g24 { margin: 0 10px 0 9px; }
.grip.g22 { margin: 0 8px 0 10px; }
.drop { flex: none; width: 18px; height: 6px; background: #555; clip-path: polygon(4px 0, 14px 0, 9px 100%); }
.drop.off { opacity: .5; }
.drop.off2 { width: 16px; opacity: .5; }
.hidden-tools { width: 353px; }
.rule { flex: none; width: 1px; height: 29px; margin: 0 4px 0 5px; background: #d0d0d0; }

.work { display: flex; height: 880px; background: #efefef; }
.side { display: flex; flex-direction: column; width: 294px; margin-right: 9px; }
h2 { height: 21px; margin: 0; padding: 0 4px; font-size: 18px; line-height: 20px; font-weight: 350; }
.ptools { display: flex; align-items: center; height: 43px; padding: 0 0 2px 10px; gap: 12px; }
.ptools svg { width: 22px; height: 22px; }
.tree { height: 357px; overflow: hidden; background: #fff; border: 1px solid #b8b8b8; }
.node { display: flex; align-items: center; height: 26px; white-space: nowrap; letter-spacing: .3px; }
.node::before { content: ""; width: 6px; height: 12px; margin: 0 9px 0 7px; background: #606060; clip-path: polygon(0 0, 100% 50%, 0 100%); }
.node.leaf::before { background: none; }
.node svg { width: 24px; height: 24px; margin-right: 6px; }
.hscroll { height: 21px; border: 1px solid #b8b8b8; border-top: 0; background: #fafafa; }
.hscroll i { display: block; width: 21px; height: 20px; border-right: 1px solid #b8b8b8; padding: 5px 7px; background: linear-gradient(#fafafa, #eee); }
.hscroll i::before { content: ""; display: block; width: 6px; height: 11px; background: #555; clip-path: polygon(100% 0, 0 50%, 100% 100%); }
h2.lay { height: 33px; line-height: 40px; }
.ptools.low { height: 40px; }
.layers { flex: 1; background: #fff; border: 1px solid #b8b8b8; }
.layer { display: flex; align-items: center; height: 25px; padding-left: 33px; background: #0078d7; color: #fff; }
.box { display: block; width: 21px; height: 21px; border: 1px solid #bbb; background: #fff; }
.box svg { width: 19px; height: 19px; }
.dot { width: 12px; height: 12px; margin: 0 11px; border: 1px solid #232323; border-radius: 50%; background: #bed04f; }
.name { text-decoration: underline; text-decoration-thickness: 1px; text-underline-offset: 2px; font-weight: 500; letter-spacing: .05px; }
.map { width: 1616px; border: 1px solid #b4b4b4; border-top: 0; background: #fff; }
.map svg { width: 1614px; height: 879px; }
.pt { fill: #bccf4f; stroke: #25261e; stroke-width: 1.100px; }

.status { display: flex; align-items: center; height: 33px; margin-top: 1px; font: 17px/22px "Liberation Serif", "Noto Sans CJK TC", serif; letter-spacing: -.3px; white-space: nowrap; }
.locate { display: flex; align-items: center; width: 295px; height: 30px; margin: 0 617px 0 4px; padding-left: 11px; gap: 8px; border: 1px solid #a9a9a9; border-radius: 3px; background: #fff; color: #808080; font-size: 18px; letter-spacing: -.2px; }
.locate svg { width: 19px; height: 19px; }
.status label { padding-top: 2px; }
.field { display: flex; align-items: center; justify-content: space-between; height: 29px; padding-left: 5px; border: 1px solid #ababab; border-radius: 3px; background: #fff; }
.s-coord { width: 72px; letter-spacing: -.75px; }
.f-coord { width: 123px; letter-spacing: -.4px; }
.i-mouse { width: 23px; height: 23px; margin: 0 13px 0 5px; }
.s-scale { width: 37px; }
.f-scale { width: 106px; height: 26px; padding-left: 3px; letter-spacing: -.55px; }
.dd { width: 30px; height: 24px; background: linear-gradient(#fdfdfd, #ececec); padding: 9px; }
.dd::after { content: ""; display: block; width: 12px; height: 7px; background: #555; clip-path: polygon(0 0, 100% 0, 50% 100%); }
.i-lock { width: 19px; height: 23px; margin: 0 9px 0 13px; }
.s-mag { width: 64px; letter-spacing: -.6px; }
.f-mag { width: 104px; margin-right: 9px; letter-spacing: -.6px; }
.spin { width: 21px; height: 27px; border-left: 1px solid #ababab; }
.spin::before, .spin::after { content: ""; display: block; width: 10px; height: 6px; margin: 5px 5px 0; background: #555; clip-path: polygon(50% 0, 100% 100%, 0 100%); }
.spin::after { transform: scaleY(-1); }
.s-rot { width: 62px; letter-spacing: -.5px; }
.f-rot { width: 96px; margin-right: 6px; }
.s-box { width: 22px; height: 22px; margin-right: 7px; }
.s-ren { width: 60px; letter-spacing: -.6px; }
.i-wire { width: 23px; height: 23px; }
.s-epsg { width: 96px; margin-left: 3px; letter-spacing: -1.100px; }
.i-bub { width: 25px; height: 24px; }
.edge { height: 2px; background: #45464a; }

.menu { position: absolute; background: #fff; border: 1px solid #989898; box-shadow: 2px 2px 2px #808080; }
.main-menu { left: 97px; top: 120px; width: 348px; height: 568px; }
.sub-menu { left: 444px; top: 562px; width: 339px; height: 124px; }
.item { display: flex; align-items: center; height: 31px; padding-left: 37px; white-space: nowrap; letter-spacing: .35px; }
.item span { padding-bottom: 2px; }
.item:first-child, .item:last-child { height: 30px; }
.item svg, .empty { width: 24px; height: 24px; margin: 0 6px 0 -30px; }
.empty { width: 20px; height: 20px; margin: 0 9px 0 -29px; border: 1px solid #bdbdbd; }
.dis { color: #777; }
.dis svg { opacity: .35; filter: grayscale(.6); }
.menu hr { height: 2px; margin: 0 7px 0 6px; border: 0; border-top: 1px solid #c2c2c2; }
.on { color: #fff; background: #0078d7; box-shadow: inset 0 1px #42a8ff, inset 0 -1px #42a8ff; }
.sub-menu .on { border-left: 1px solid #42a8ff; margin-left: -1px; }
.sub-menu .item { padding-left: 37px; letter-spacing: .22px; }
.sub::after { content: ""; width: 7px; height: 12px; margin: 0 5px 0 auto; background: #606060; clip-path: polygon(0 0, 100% 50%, 0 100%); }
.sub.on::after { background: #8fc6f5; }
```
FILE: points.js
```js
const sheets = [
  [0, 0, 1, "1034.5,264.5 961.5,286 955,294.5 952,324.5 958,325 701,552 708,555 714.5,550 712,552 725.5,544 727.5,551 723,552"],
  [1080, 400, 3, "345,75 318,88 315,90 378,105 400,123 284,122 289,126 270,138 335,140 340,142 320,146 436,133 440,138 448,137 446,144 412,146 405,155 414,153 430,147 453,156 480,186 507,180 420,192 411,234 336,261 246,284 249,286 146,181 152,183 130,187 129,190 215,163 220,168 180,176 218,178 140,215 165,220 185,220 205,205 240,190 260,195 255,173 243,207 200,220 190,228 225,228 270,165 300,150 324,150 293,160 275,190 305,185 285,180 350,158 375,170 362,182 345,170 324,173 387,175 325,198 340,190 330,198 386,207 360,205 312,225 330,222 335,215 348,210 290,215 270,235 261,236 155,245 160,248 200,277 220,257 190,265 120,235 125,240 115,245 87,248 62,272 75,280 95,265 65,297 97,278 127,280 115,293 150,292 171,297 90,308 127,303 50,310 45,320 155,327 183,336 120,335 102,341 147,369 72,360 93,384 57,408 35,340 54,341 33,367 5,362 30,393 15,396 3,378 15,425 3,433 33,470 33,463 51,450 0,465 18,509 18,535 15,540 10,543 42,572 40,573 207,537 460,267 435,285 415,318 413,319 443,318 384,353 362,348 425,352 432,350 462,360 450,346 452,370 447,366 480,384 478,388 468,384 450,441"],
  [860, 470, 3, "663,150 658,162 660,168 692,158 643,190 675,186 680,212 628,210 612,222 660,224 585,258 612,256 597,243 651,255 580,290 567,285 597,291 625,300 632,301 565,320 540,330 560,330 543,327 603,322 545,360 548,353 590,350 620,345 594,339 678,300 640,310 675,325 672,332 667,333 655,319 600,370 575,395 632,375 515,378 530,390 517,381 522,370 545,405 590,390 567,401 618,415 610,396 495,415 500,415 498,420 525,425 551,426 590,425 588,435 490,457 480,440 513,441 545,445 575,455 620,440 610,453 551,441 458,455 450,473 475,485 530,470 550,465 551,475 500,480 570,480 600,470 615,483 567,484 545,490 450,503 497,500 475,520 500,520 528,505 560,510 590,515 640,500 648,491 655,516 630,530 621,513 580,535 582,525 685,524 687,523 430,530 445,545 420,551 480,540 470,550 515,540 530,548 513,527 465,546 610,545 606,547 642,555 575,573 550,570 545,580 392,573 415,580 440,575 460,570 490,565 500,580 520,585 483,582 380,605 385,615 405,600 447,597 535,600 555,594 515,615 500,625 483,614 390,640 395,645 420,635 417,630 440,625 465,640 462,638 530,635 555,626 515,650 525,655 497,639 415,677 420,675 435,665 465,660 480,675 515,670 498,670 553,652 540,696 555,678 372,683 375,681 460,685 445,702 483,695 510,715 380,717 467,720 495,728 486,740 413,735 425,743 448,745 698,363 700,362 700,415 703,418 688,422 728,437 743,457 735,450 738,453 726,486 813,429 867,327 687,576 702,621 621,678 621,677 570,753 621,777 648,816 135,555 128,587 156,591 156,624 87,618 115,630 122,628 128,651 118,633 83,723 92,723 54,795"],
  [960, 540, 3, "734,173 738,230 732,235 728,237 723,215 713,240 704,239 690,268 675,297 678,288 654,342 642,377 642,375 636,357 684,408 621,453 595,526 592,524 588,521 656,534 654,534"],
  [960, 700, 3, "78,28 115,45 125,53 150,60 168,32 195,40 210,28 186,50 66,70 63,75 88,95 144,70 78,108 123,93 160,97 164,95 147,110 68,131 115,140 165,142 105,160 85,150 63,167 84,173 140,160 168,153 188,171 223,117 220,119 210,140 219,177 270,63 321,87 348,126 270,158 290,197 288,195 75,195 85,200 93,198 145,180 123,190 84,220 100,230 130,210 145,212 168,210 105,240 90,245 120,258 160,252 170,250 153,248 213,220 210,228 246,208 245,207 260,245 240,240 248,243 303,246 212,267 280,266 282,285 272,276 108,276 135,285 140,290 168,288 115,298 115,315 150,310 126,300 163,325 228,293 228,297 225,315 264,303 260,325 296,326 295,326 330,306 130,345 128,350 130,360 125,372 145,380 150,378 140,357 168,347 190,335 215,345 223,345 245,350 275,342 195,365 183,372 225,375 262,370 250,380 288,378 160,410 155,400 180,415 213,397 245,405 287,408 183,414 208,435 210,432 235,415 255,435 232,450 260,445 230,426 252,456 270,480 285,477 177,486 297,525 315,555 321,552 323,608 339,597 339,640 339,639 381,633 564,117 549,141 524,174 531,150 621,150 588,210 513,236 510,236 492,240 515,300 512,308 518,303 492,294 521,306 471,327 453,372 456,367 435,405 663,342 411,483 402,510 699,630"]
];
const canvas = document.getElementById("canvas");
const sites = sheets.flatMap(([ox, oy, unit, list]) =>
  list.split(" ").map((pair) => {
    const [x, y] = pair.split(",").map(Number);
    return [ox + x / unit, oy + y / unit];
  })
);

function plot(x, y) {
  const c = document.createElementNS("http://www.w3.org/2000/svg", "circle");
  c.setAttribute("class", "pt");
  c.setAttribute("cx", x.toFixed(2));
  c.setAttribute("cy", y.toFixed(2));
  c.setAttribute("r", "5.6");
  canvas.appendChild(c);
}

for (const [i, [x, y]] of sites.entries()) {
  const near = sites.filter(([a, b]) => Math.hypot(a - x, b - y) < 13).length;
  if (near < 8 || (x > 1195 && y > 480)) continue;
  for (let k = 0; k < 3; k++) {
    const angle = i * 2.4 + k * 2.1;
    const reach = 1 + ((i + k * 3) % 4) * 0.8;
    plot(x + Math.cos(angle) * reach, y + Math.sin(angle) * reach);
  }
}
for (const [x, y] of sites) plot(x, y);
```
